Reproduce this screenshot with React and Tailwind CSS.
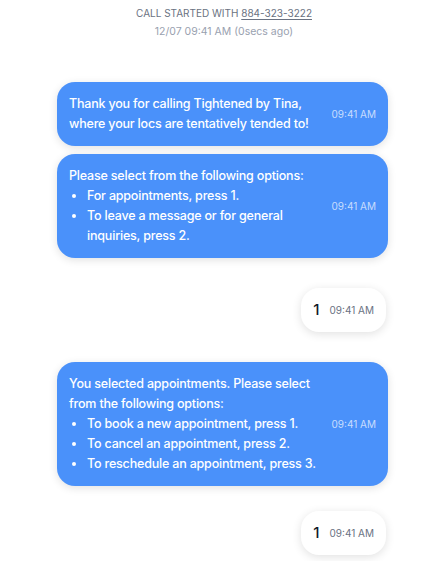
const font = { fontFamily: 'Inter, "Noto Sans", sans-serif' };

function Bot({ children }) {
  return (
    <div className="flex items-center rounded-[18px] bg-[#4a91fa] py-3 pl-3 pr-3 text-[12.5px] font-medium leading-5 tracking-[-0.015em] text-white shadow-[0_2px_8px_rgba(0,0,0,0.12)]">
      <div className="w-[252px]">{children}</div>
      <span className="ml-auto text-[10px] font-normal tracking-normal text-white/70">09:41 AM</span>
    </div>
  );
}

function Caller({ digit }) {
  return (
    <div className="flex items-center rounded-[18px] bg-white px-3 py-3 leading-5 shadow-[0_2px_10px_rgba(0,0,0,0.12)]">
      <span className="text-[15px] font-medium text-gray-900">{digit}</span>
      <span className="ml-[10px] text-[10px] text-gray-500">09:41 AM</span>
    </div>
  );
}

export default function App() {
  return (
    <div className="min-h-[561px] bg-white" style={font}>
      <div className="pt-[7px] text-center">
        <p className="text-[10px] leading-[13px] text-gray-500">
          CALL STARTED WITH <span className="underline underline-offset-2">884-323-3222</span>
        </p>
        <p className="mt-[5px] text-[10.5px] leading-[13px] text-gray-400">12/07 09:41 AM (0secs ago)</p>
      </div>

      <div className="ml-[57px] mr-[60px] mt-[44px] flex flex-col">
        <Bot>
          <p>Thank you for calling Tightened by Tina,</p>
          <p>where your locs are tentatively tended to!</p>
        </Bot>
        <div className="mt-[8px]">
          <Bot>
            <p>Please select from the following options:</p>
            <ul className="list-disc pl-[18px]">
              <li>For appointments, press 1.</li>
              <li>To leave a message or for general inquiries, press 2.</li>
            </ul>
          </Bot>
        </div>
        <div className="mr-[2px] mt-[30px] self-end">
          <Caller digit="1" />
        </div>
        <div className="mt-[30px]">
          <Bot>
            <p>You selected appointments. Please select from the following options:</p>
            <ul className="list-disc pl-[18px]">
              <li>To book a new appointment, press 1.</li>
              <li>To cancel an appointment, press 2.</li>
              <li>To reschedule an appointment, press 3.</li>
            </ul>
          </Bot>
        </div>
        <div className="mr-[2px] mt-[25px] self-end">
          <Caller digit="1" />
        </div>
      </div>
    </div>
  );
}
